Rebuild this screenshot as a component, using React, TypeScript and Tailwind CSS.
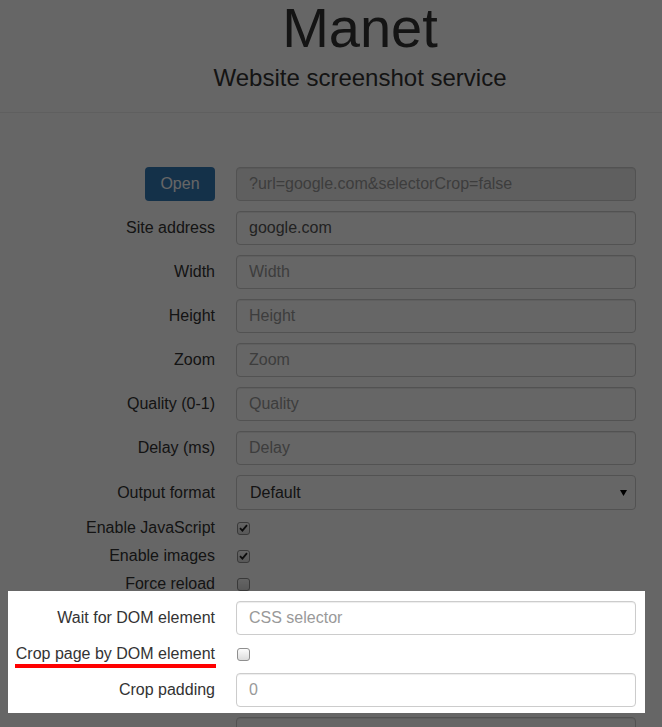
import React from "react";

const CAMPOS = [
  { label: "Site address", value: "google.com" },
  { label: "Width", placeholder: "Width" },
  { label: "Height", placeholder: "Height" },
  { label: "Zoom", placeholder: "Zoom" },
  { label: "Quality (0-1)", placeholder: "Quality" },
  { label: "Delay (ms)", placeholder: "Delay" },
];

const inputCls =
  "w-[400px] h-[34px] rounded-[4px] border border-[#ccc] px-3 text-base text-[#555] placeholder:text-[#999] outline-none shadow-[inset_0_1px_1px_rgba(0,0,0,0.075)]";

function Fila({
  label,
  ancho = 215,
  children,
  className = "",
}: {
  label: React.ReactNode;
  ancho?: number;
  children: React.ReactNode;
  className?: string;
}) {
  return (
    <div className={"flex items-center gap-[21px] " + className}>
      <div className="shrink-0 text-right text-base" style={{ width: ancho }}>
        {label}
      </div>
      {children}
    </div>
  );
}

// Casilla al estilo del Chromium antiguo (gris, check oscuro)
function Casilla({ checked = false }: { checked?: boolean }) {
  return (
    <span className="ml-[1px] flex h-[13px] w-[13px] items-center justify-center rounded-[3px] border border-[#8f8f8f] bg-gradient-to-b from-[#fcfcfc] to-[#dcdcdc]">
      {checked && (
        <svg width="9" height="8" viewBox="0 0 9 8">
          <path d="M1 4.2 3.4 6.6 8 1.2" fill="none" stroke="#222" strokeWidth="1.8" />
        </svg>
      )}
    </span>
  );
}

export default function App() {
  return (
    <div className="relative min-h-[727px] overflow-hidden bg-white font-['Liberation_Sans',Arial,sans-serif] text-[#333]">
      {/* Encabezado */}
      <header className="pl-[58px] text-center">
        <h1 className="text-[56px] leading-none">Manet</h1>
        <p className="mt-[10px] text-2xl leading-none">Website screenshot service</p>
      </header>
      <hr className="mt-[22px] border-t border-[#eee]" />

      <form className="mt-[54px]">
        <Fila label={
          <span className="inline-flex h-[34px] w-[70px] items-center justify-center rounded-[4px] bg-[#337ab7] text-white">Open</span>
        } className="mb-[10px]">
          <input readOnly value="?url=google.com&selectorCrop=false" className={inputCls + " bg-[#eee] text-[#999]"} />
        </Fila>

        {CAMPOS.map((c) => (
          <Fila key={c.label} label={c.label} className="mb-[10px]">
            <input readOnly value={c.value} placeholder={c.placeholder} className={inputCls} />
          </Fila>
        ))}

        <Fila label="Output format" className="mb-[4px]">
          <div className="flex h-[35px] w-[400px] items-center justify-between rounded-[4px] border border-[#ccc] pl-[13px] pr-[8px] text-base text-[#333]">
            <span>Default</span>
            <svg width="7" height="6" viewBox="0 0 7 6">
              <path d="M0 0h7L3.5 6z" fill="#000" />
            </svg>
          </div>
        </Fila>

        <Fila label="Enable JavaScript" className="h-[28px]">
          <Casilla checked />
        </Fila>
        <Fila label="Enable images" className="h-[28px]">
          <Casilla checked />
        </Fila>
        <Fila label="Force reload" className="h-[28px]">
          <Casilla />
        </Fila>

        {/* Zona resaltada */}
        <div className="relative z-20 ml-[8px] mt-[-7px] w-[637px] bg-white pb-[6px] pt-[10px]">
          <Fila label="Wait for DOM element" ancho={207} className="mb-[5px]">
            <input readOnly placeholder="CSS selector" className={inputCls} />
          </Fila>
          <Fila
            label={
              <span className="relative inline-block leading-[18px]">
                Crop page by DOM element
                <span className="absolute -left-px -right-px top-[19px] h-[4px] bg-[#ff0000]" />
              </span>
            }
            ancho={207}
            className="h-[28px]"
          >
            <Casilla />
          </Fila>
          <Fila label="Crop padding" ancho={207} className="mt-[5px]">
            <input readOnly placeholder="0" className={inputCls} />
          </Fila>
        </div>

        <Fila label="Callback URL" className="mt-[4px] mb-[10px]">
          <input readOnly placeholder="URL" className={inputCls} />
        </Fila>
      </form>

      {/* Capa oscura */}
      <div className="pointer-events-none absolute inset-0 z-10 bg-black/60" />
    </div>
  );
}
